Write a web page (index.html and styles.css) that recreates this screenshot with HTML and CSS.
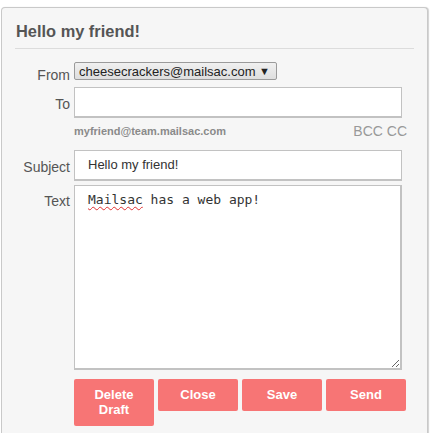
FILE: index.html
```html
<!DOCTYPE html>
<html>
<head>
<meta charset="utf-8">
<link rel="stylesheet" href="styles.css">
</head>
<body>
<div class="panel">
  <h2 class="title">Hello my friend!</h2>
  <div class="form">
    <label class="lbl lbl-from">From</label>
    <div class="select-row"><span class="select">cheesecrackers@mailsac.com <span class="caret">▼</span></span></div>

    <label class="lbl lbl-mid">To</label>
    <div class="input to-input"></div>

    <div class="hint-row">
      <span class="hint">myfriend@team.mailsac.com</span>
      <span class="bcc">BCC CC</span>
    </div>

    <label class="lbl lbl-mid">Subject</label>
    <div class="input subject-input">Hello my friend!</div>

    <label class="lbl lbl-text">Text</label>
    <div class="textarea"><span class="misspelled">Mailsac</span> has a web app!</div>

    <div class="buttons">
      <button class="btn">Delete Draft</button>
      <button class="btn">Close</button>
      <button class="btn">Save</button>
      <button class="btn">Send</button>
    </div>
  </div>
</div>
</body>
</html>
```
FILE: styles.css
```css
html, body {
  margin: 0;
  padding: 0;
  background: #ffffff;
  font-family: "Liberation Sans", Arial, sans-serif;
}
.panel {
  margin: 7px 0 0 1px;
  width: 427px;
  box-sizing: border-box;
  min-height: 440px;
  background: #f6f6f6;
  border: 1px solid #c9c9c9;
  border-bottom: none;
  border-radius: 4px 4px 0 0;
  box-shadow: 1px 0 1px rgba(0,0,0,0.18);
  padding: 0 13px 0 13px;
}
.title {
  margin: 0;
  padding: 13px 0 7px 1px;
  font-size: 16.4px;
  line-height: 20px;
  font-weight: bold;
  color: #555;
  border-bottom: 1px solid #dcdcdc;
}
.form {
  display: grid;
  grid-template-columns: 55px 333px;
  column-gap: 4px;
  align-items: start;
}
.lbl {
  grid-column: 1;
  text-align: right;
  font-size: 14px;
  line-height: 16px;
  color: #555;
}
.lbl-from { margin-top: 18px; margin-bottom: -3px; }
.lbl-mid { align-self: end; line-height: 31px; margin-bottom: -2px; }
.lbl-text { margin-top: 12px; }
.select-row {
  grid-column: 2;
  margin-top: 13px;
  height: 18px;
}
.select {
  display: inline-block;
  box-sizing: border-box;
  height: 18px;
  width: 203px;
  padding: 0 0 0 4px;
  font-size: 13px;
  line-height: 16px;
  color: #222;
  background: linear-gradient(#f0f0f0, #dedede);
  border: 1px solid #9a9a9a;
  border-radius: 2px;
  white-space: nowrap;
}
.caret {
  font-size: 11px;
  vertical-align: 1px;
}
.input {
  grid-column: 2;
  box-sizing: border-box;
  width: 328px;
  height: 31px;
  background: #fff;
  border: 1px solid #c2c2c2;
  border-bottom-width: 2px;
  padding: 0 13px;
  font-size: 13px;
  line-height: 28px;
  color: #333;
}
.to-input { margin-top: 7px; }
.subject-input { margin-top: 9px; }
.hint-row {
  grid-column: 2;
  margin-top: 3px;
  display: flex;
  justify-content: space-between;
  align-items: center;
  height: 20px;
}
.hint {
  font-size: 11px;
  font-weight: bold;
  color: #8a8a8a;
}
.bcc {
  font-size: 14px;
  color: #999;
}
.textarea {
  grid-column: 2;
  margin-top: 4px;
  box-sizing: border-box;
  width: 328px;
  height: 185px;
  background: #fff;
  border: 1px solid #c2c2c2;
  border-right-width: 2px;
  border-bottom-width: 2px;
  padding: 6px 13px;
  font-family: "DejaVu Sans Mono", monospace;
  font-size: 13px;
  line-height: 16px;
  color: #333;
  resize: both;
  overflow: auto;
}
.misspelled {
  text-decoration: underline wavy #e03030;
  text-decoration-thickness: 1px;
  text-underline-offset: 2px;
}
.buttons {
  grid-column: 2;
  margin-top: 9px;
  display: flex;
  gap: 4px;
  align-items: flex-start;
}
.btn {
  width: 80px;
  min-height: 32px;
  box-sizing: border-box;
  padding: 8px 8px 9px;
  border: none;
  border-radius: 2px;
  background: #f77575;
  color: #fff;
  font-family: "Liberation Sans", Arial, sans-serif;
  font-size: 13px;
  line-height: 15px;
  font-weight: bold;
}
```
